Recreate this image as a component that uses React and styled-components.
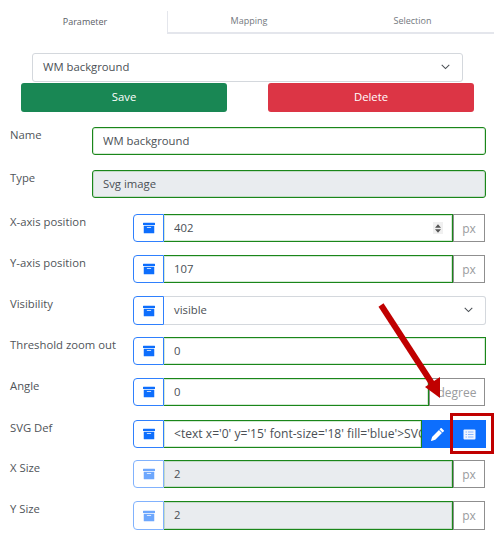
import React from "react";
import styled, { createGlobalStyle } from "styled-components";

const GlobalStyle = createGlobalStyle`
  html, body {
    margin: 0;
    padding: 0;
    background: #fff;
  }
  body {
    font-family: "Open Sans", "Noto Sans", sans-serif;
    font-size: 11.3px;
    color: #4a4f55;
  }
`;

const Page = styled.div`
  position: relative;
  width: 499px;
  height: 545px;
  overflow: hidden;
  box-sizing: border-box;
  padding-top: 11px;
`;

const Tabs = styled.div`
  display: grid;
  grid-template-columns: 168px 165px 161px;
  width: 494px;
  height: 23px;
`;

const Tab = styled.div`
  display: flex;
  align-items: center;
  justify-content: center;
  padding: 0 ${(p) => p.$right || 0}px 3px ${(p) => p.$left || 0}px;
  box-sizing: border-box;
  font-size: 9px;
  color: ${(p) => (p.$active ? "#5b6066" : "#73787e")};
  border-right: ${(p) => (p.$active ? "1px solid #e4e6ec" : "none")};
  border-bottom: ${(p) => (p.$active ? "none" : "2px solid #e4e6ec")};
`;

const SelectBox = styled.div`
  display: flex;
  align-items: center;
  justify-content: space-between;
  box-sizing: border-box;
  height: 29px;
  padding: 0 11px 2px 10px;
  background: #fff;
  border: 1px solid #d4d8dd;
  border-radius: 3px;
  color: #4a4f55;
`;

const TopSelect = styled.div`
  margin: 19px 36px 0 32px;
`;

const Actions = styled.div`
  display: flex;
  justify-content: space-between;
  margin: 1px 25px 0 21px;
`;

const ActionButton = styled.button`
  width: 206px;
  height: 29px;
  padding: 0 0 2px;
  border: none;
  border-radius: 3px;
  background: ${(p) => p.$bg};
  color: #fff;
  font: inherit;
`;

const Form = styled.div`
  display: flex;
  flex-direction: column;
  margin: 15px 13px 0 10px;
`;

const Row = styled.div`
  display: grid;
  grid-template-columns: ${(p) => (p.$short ? "82px" : "123px")} 1fr;
  margin-top: ${(p) => p.$gap || 0}px;
`;

const Label = styled.label`
  line-height: 16px;
  color: #4f5459;
`;

const Group = styled.div`
  display: flex;
  height: ${(p) => p.$height || 28}px;
  position: relative;
`;

const IconBox = styled.div`
  display: flex;
  align-items: center;
  justify-content: center;
  flex: 0 0 31px;
  box-sizing: border-box;
  border: 1px solid #2f80fd;
  border-radius: 4px 0 0 4px;
  background: #fff;
  color: #0d6efd;
  opacity: ${(p) => (p.$disabled ? 0.6 : 1)};
`;

const Field = styled.input`
  flex: 1;
  min-width: 0;
  box-sizing: border-box;
  height: 100%;
  padding: 0 0 2px 10px;
  border: 1px solid #1a861a;
  border-left-width: ${(p) => (p.$alone ? 1 : 0)}px;
  border-radius: ${(p) => (p.$alone ? "3px" : "0")};
  box-shadow: inset 0 0 0 1px rgba(60, 160, 60, 0.22);
  background: ${(p) => (p.$off ? "#e9ecef" : "#fff")};
  color: #4a4f55;
  font: inherit;
  font-size: ${(p) => (p.$wide ? "12.1px" : "inherit")};
  outline: none;
`;

const Select = styled(SelectBox)`
  flex: 1;
  height: 100%;
  border-left: none;
  border-radius: 0 3px 3px 0;
`;

const Unit = styled.div`
  display: flex;
  align-items: center;
  justify-content: center;
  flex: 0 0 ${(p) => p.$width || 32}px;
  box-sizing: border-box;
  margin-right: 1px;
  border: 1px solid #8f8f8f;
  color: #9a9c9e;
  font-size: 12px;
  background: #fff;
`;

const Spinner = styled.div`
  position: absolute;
  right: 43px;
  top: 8px;
  display: flex;
  align-items: center;
  justify-content: center;
  width: 10px;
  height: 12px;
  background: #f0f0f0;
`;

const SolidButton = styled.div`
  display: flex;
  align-items: center;
  justify-content: center;
  flex: 0 0 ${(p) => p.$width}px;
  background: #0d6efd;
  color: #fff;
`;

const Highlight = styled.div`
  position: absolute;
  left: 450px;
  top: 413px;
  width: 44px;
  height: 41px;
  box-sizing: border-box;
  border: 3px solid #c00000;
`;

const Arrow = styled.svg`
  position: absolute;
  left: 370px;
  top: 295px;
`;

const Chevron = () => (
  <svg width="11" height="11" viewBox="0 0 16 16">
    <path d="M2.5 5.5 8 11l5.5-5.5" fill="none" stroke="#4a4f55" strokeWidth="1.5" />
  </svg>
);

const ArchiveIcon = () => (
  <svg width="12" height="12" viewBox="0 0 16 16" fill="currentColor">
    <path d="M0 1.5A.5.5 0 0 1 .5 1h15a.5.5 0 0 1 .5.5V4H0z" />
    <path d="M1 5h14v9.5a.5.5 0 0 1-.5.5h-13a.5.5 0 0 1-.5-.5zm4.5 2a.5.5 0 0 0 0 1h5a.5.5 0 0 0 0-1z" fillRule="evenodd" />
  </svg>
);

const PencilIcon = () => (
  <svg width="13" height="13" viewBox="0 0 16 16" fill="currentColor">
    <path d="M12.85.15a.5.5 0 0 0-.7 0L10.5 1.8l3.7 3.7 1.65-1.65a.5.5 0 0 0 0-.7zM9.8 2.5 1.6 10.7a.5.5 0 0 0-.12.2L.03 15.35a.5.5 0 0 0 .62.62l4.45-1.45a.5.5 0 0 0 .2-.12l8.2-8.2z" />
  </svg>
);

const ListIcon = () => (
  <svg width="13" height="11" viewBox="0 0 13 11">
    <rect x="0.5" y="0.5" width="12" height="10" rx="1" fill="#f0f5ff" />
    <path d="M2.5 3h1.5M2.5 5.5h1.5M2.5 8h1.5M5 3h5.5M5 5.5h5.5M5 8h5.5" stroke="#8ab6fe" strokeWidth="1" />
  </svg>
);

const SpinArrows = () => (
  <svg width="6" height="9" viewBox="0 0 7 10" fill="#555">
    <path d="M3.5 0 7 4H0zM3.5 10 0 6h7z" />
  </svg>
);

const App = () => {
  return (
    <Page>
      <GlobalStyle />
      <Tabs>
        <Tab $active $left={3}>Parameter</Tab>
        <Tab $right={3}>Mapping</Tab>
        <Tab $right={2}>Selection</Tab>
      </Tabs>
      <TopSelect>
        <SelectBox>
          WM background
          <Chevron />
        </SelectBox>
      </TopSelect>
      <Actions>
        <ActionButton $bg="#198754">Save</ActionButton>
        <ActionButton $bg="#dc3545">Delete</ActionButton>
      </Actions>
      <Form>
        <Row $short>
          <Label>Name</Label>
          <Group>
            <Field $alone readOnly value="WM background" />
          </Group>
        </Row>
        <Row $short $gap={15}>
          <Label>Type</Label>
          <Group>
            <Field $alone $off readOnly value="Svg image" />
          </Group>
        </Row>
        <Row $gap={16}>
          <Label>X-axis position</Label>
          <Group>
            <IconBox><ArchiveIcon /></IconBox>
            <Field readOnly value="402" />
            <Spinner><SpinArrows /></Spinner>
            <Unit>px</Unit>
          </Group>
        </Row>
        <Row $gap={13}>
          <Label>Y-axis position</Label>
          <Group>
            <IconBox><ArchiveIcon /></IconBox>
            <Field readOnly value="107" />
            <Unit>px</Unit>
          </Group>
        </Row>
        <Row $gap={13}>
          <Label>Visibility</Label>
          <Group $height={29}>
            <IconBox><ArchiveIcon /></IconBox>
            <Select>
              visible
              <Chevron />
            </Select>
          </Group>
        </Row>
        <Row $gap={12}>
          <Label>Threshold zoom out</Label>
          <Group>
            <IconBox><ArchiveIcon /></IconBox>
            <Field readOnly value="0" />
          </Group>
        </Row>
        <Row $gap={13}>
          <Label>Angle</Label>
          <Group>
            <IconBox><ArchiveIcon /></IconBox>
            <Field readOnly value="0" />
            <Unit $width={56}>degree</Unit>
          </Group>
        </Row>
        <Row $gap={14}>
          <Label>SVG Def</Label>
          <Group>
            <IconBox><ArchiveIcon /></IconBox>
            <Field $wide readOnly value="<text x='0' y='15' font-size='18' fill='blue'>SVG</text>" />
            <SolidButton $width={30}><PencilIcon /></SolidButton>
            <SolidButton $width={34}><ListIcon /></SolidButton>
          </Group>
        </Row>
        <Row $gap={12}>
          <Label>X Size</Label>
          <Group>
            <IconBox $disabled><ArchiveIcon /></IconBox>
            <Field $off readOnly value="2" />
            <Unit>px</Unit>
          </Group>
        </Row>
        <Row $gap={13}>
          <Label>Y Size</Label>
          <Group $height={29}>
            <IconBox $disabled><ArchiveIcon /></IconBox>
            <Field $off readOnly value="2" />
            <Unit>px</Unit>
          </Group>
        </Row>
      </Form>
      <Arrow width="80" height="110" viewBox="0 0 80 110">
        <path d="M11 10 63 90" stroke="#c00000" strokeWidth="6" fill="none" />
        <path d="M55 92 70 82 70 103z" fill="#c00000" />
      </Arrow>
      <Highlight />
    </Page>
  );
};

export default App;
